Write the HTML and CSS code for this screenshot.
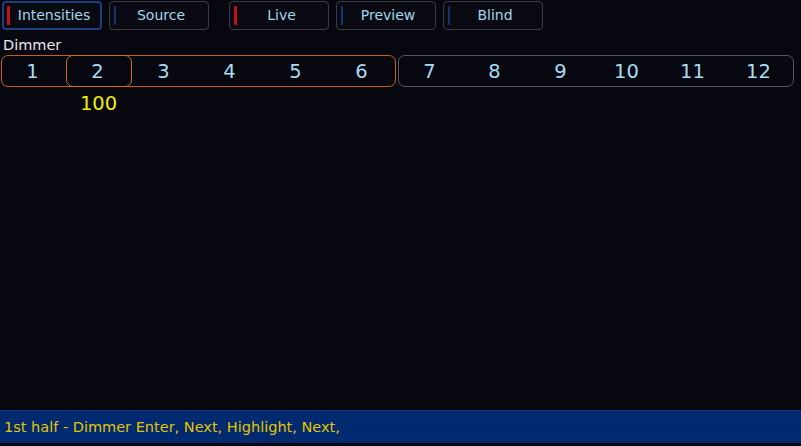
FILE: index.html
```html
<!DOCTYPE html>
<html>
<head>
<meta charset="utf-8">
<link rel="stylesheet" href="styles.css">
</head>
<body>
<div class="page">
  <div class="toolbar">
    <div class="btn active"><span class="bar red"></span><span class="label">Intensities</span></div>
    <div class="btn"><span class="bar blue"></span><span class="label">Source</span></div>
    <div class="btn spaced"><span class="bar red"></span><span class="label">Live</span></div>
    <div class="btn"><span class="bar blue"></span><span class="label">Preview</span></div>
    <div class="btn"><span class="bar blue"></span><span class="label">Blind</span></div>
  </div>
  <div class="section-label">Dimmer</div>
  <div class="channels">
    <div class="group orange">
      <div class="cell">1</div>
      <div class="cell selected">2</div>
      <div class="cell">3</div>
      <div class="cell">4</div>
      <div class="cell">5</div>
      <div class="cell">6</div>
    </div>
    <div class="group grey">
      <div class="cell">7</div>
      <div class="cell">8</div>
      <div class="cell">9</div>
      <div class="cell">10</div>
      <div class="cell">11</div>
      <div class="cell">12</div>
    </div>
  </div>
  <div class="values">
    <div class="value"></div>
    <div class="value">100</div>
  </div>
  <div class="spacer"></div>
  <div class="status">1st half - Dimmer Enter, Next, Highlight, Next,</div>
</div>
</body>
</html>
```
FILE: styles.css
```css
html, body {
  margin: 0;
  padding: 0;
  background: #06070f;
  font-family: "DejaVu Sans", sans-serif;
}
.page {
  height: 446px;
  display: flex;
  flex-direction: column;
}
.toolbar {
  display: flex;
  padding: 1px 0 0 2px;
  gap: 7px;
}
.btn {
  width: 100px;
  height: 29px;
  box-sizing: border-box;
  border: 1px solid #3a3c44;
  border-radius: 4px;
  background: #0a0b12;
  display: flex;
  align-items: center;
  padding-left: 4px;
}
.btn.active {
  border: 2px solid #1d3f7e;
  padding-left: 3px;
}
.btn.spaced {
  margin-left: 13px;
}
.bar {
  width: 3px;
  height: 19px;
  border-radius: 1px;
  flex: none;
}
.bar.red { background: #c0101a; }
.bar.blue { background: #16356e; width: 2px; }
.label {
  flex: 1;
  text-align: center;
  color: #a2d6ee;
  font-size: 14px;
  padding-right: 2px;
  margin-top: -1px;
}
.section-label {
  color: #e8e8ee;
  font-size: 14.5px;
  padding: 7px 0 0 3px;
  height: 18px;
}
.channels {
  display: flex;
  padding-left: 1px;
  gap: 2px;
}
.group {
  display: flex;
  box-sizing: border-box;
  height: 32px;
  border-radius: 7px;
  border: 1px solid;
}
.group.orange { border-color: #c06410; width: 395px; }
.group.grey { border-color: #55565c; width: 396px; }
.cell {
  width: 66px;
  flex: none;
  box-sizing: border-box;
  display: flex;
  align-items: center;
  justify-content: center;
  color: #a6dcf4;
  font-size: 19.5px;
  padding-right: 3px;
}
.group .cell:first-child { width: 64px; }
.cell.selected {
  border: 1px solid #d46e10;
  border-radius: 7px;
  margin-top: -1px;
  height: 32px;
}
.values {
  display: flex;
  padding-left: 1px;
}
.value {
  width: 65px;
  height: 32px;
  display: flex;
  align-items: center;
  justify-content: center;
  color: #f0f000;
  font-size: 19.5px;
  padding-right: 1px;
}
.value:first-child { width: 64px; }
.spacer { flex: 1; }
.status {
  height: 33px;
  box-sizing: border-box;
  margin-bottom: 3px;
  background: #002a70;
  border-top: 1px solid #1a3a70;
  color: #e4c400;
  font-size: 14.5px;
  display: flex;
  align-items: center;
  padding-left: 4px;
}
```
